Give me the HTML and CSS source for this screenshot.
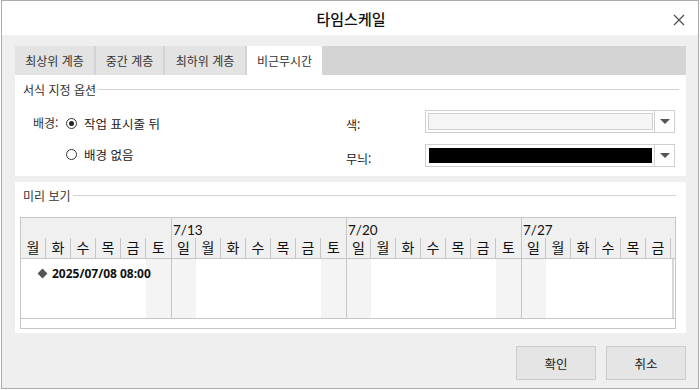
FILE: index.html
```html
<!DOCTYPE html>
<html lang="ko">
<head>
<meta charset="utf-8">
<link rel="stylesheet" href="styles.css">
</head>
<body>
<div class="dialog">
  <div class="titlebar">
    <div class="title">타임스케일</div>
    <svg class="close" width="12" height="12" viewBox="0 0 12 12"><path d="M1 1L11 11M11 1L1 11" stroke="#555" stroke-width="1.4" fill="none"/></svg>
  </div>
  <div class="content">
    <div class="tabs">
      <div class="tab">최상위 계층</div>
      <div class="tab">중간 계층</div>
      <div class="tab">최하위 계층</div>
      <div class="tab active">비근무시간</div>
    </div>
    <div class="panel panel-top">
      <div class="legend"><span>서식 지정 옵션</span><i></i></div>
      <div class="options">
        <div class="bg-opts">
          <div class="lbl">배경:</div>
          <div class="radios">
            <div class="radio checked"><span class="dot"></span>작업 표시줄 뒤</div>
            <div class="radio"><span class="dot"></span>배경 없음</div>
          </div>
        </div>
        <div class="combos">
          <div class="combo-row row1">
            <div class="clbl">색:</div>
            <div class="combo"><div class="swatch light"></div><div class="arrow"></div></div>
          </div>
          <div class="combo-row row2">
            <div class="clbl">무늬:</div>
            <div class="combo"><div class="swatch dark"></div><div class="arrow"></div></div>
          </div>
        </div>
      </div>
    </div>
    <div class="panel panel-prev">
      <div class="legend"><span>미리 보기</span><i></i></div>
      <div class="gantt">
        <div class="cols">
          <div class="col"><div class="date"></div><div class="day">월</div><div class="cell"></div></div>
          <div class="col"><div class="date"></div><div class="day">화</div><div class="cell"></div></div>
          <div class="col"><div class="date"></div><div class="day">수</div><div class="cell"></div></div>
          <div class="col"><div class="date"></div><div class="day">목</div><div class="cell"></div></div>
          <div class="col"><div class="date"></div><div class="day">금</div><div class="cell"></div></div>
          <div class="col we"><div class="date"></div><div class="day last">토</div><div class="cell"></div></div>
          <div class="col we wk"><div class="date">7/13</div><div class="day">일</div><div class="cell"></div></div>
          <div class="col"><div class="date"></div><div class="day">월</div><div class="cell"></div></div>
          <div class="col"><div class="date"></div><div class="day">화</div><div class="cell"></div></div>
          <div class="col"><div class="date"></div><div class="day">수</div><div class="cell"></div></div>
          <div class="col"><div class="date"></div><div class="day">목</div><div class="cell"></div></div>
          <div class="col"><div class="date"></div><div class="day">금</div><div class="cell"></div></div>
          <div class="col we"><div class="date"></div><div class="day last">토</div><div class="cell"></div></div>
          <div class="col we wk"><div class="date">7/20</div><div class="day">일</div><div class="cell"></div></div>
          <div class="col"><div class="date"></div><div class="day">월</div><div class="cell"></div></div>
          <div class="col"><div class="date"></div><div class="day">화</div><div class="cell"></div></div>
          <div class="col"><div class="date"></div><div class="day">수</div><div class="cell"></div></div>
          <div class="col"><div class="date"></div><div class="day">목</div><div class="cell"></div></div>
          <div class="col"><div class="date"></div><div class="day">금</div><div class="cell"></div></div>
          <div class="col we"><div class="date"></div><div class="day last">토</div><div class="cell"></div></div>
          <div class="col we wk"><div class="date">7/27</div><div class="day">일</div><div class="cell"></div></div>
          <div class="col"><div class="date"></div><div class="day">월</div><div class="cell"></div></div>
          <div class="col"><div class="date"></div><div class="day">화</div><div class="cell"></div></div>
          <div class="col"><div class="date"></div><div class="day">수</div><div class="cell"></div></div>
          <div class="col"><div class="date"></div><div class="day">목</div><div class="cell"></div></div>
          <div class="col"><div class="date"></div><div class="day">금</div><div class="cell"></div></div>
          <div class="col tail"><div class="date"></div><div class="day"></div><div class="cell"></div></div>
        </div>
        <div class="task"><span class="diamond"></span>2025/07/08 08:00</div>
        <div class="hscroll"></div>
      </div>
    </div>
    <div class="buttons">
      <button class="btn">확인</button>
      <button class="btn">취소</button>
    </div>
  </div>
</div>
</body>
</html>
```

FILE: styles.css
```css
* { box-sizing: border-box; }
html, body { margin: 0; padding: 0; }
body {
  width: 700px;
  height: 390px;
  background: #ffffff;
  font-family: "Noto Sans CJK KR", "Noto Sans", sans-serif;
  color: #222;
  overflow: hidden;
}
.dialog {
  margin-left: 1px;
  width: 698px;
  height: 389px;
  border: 1px solid #ababab;
  display: flex;
  flex-direction: column;
  background: #efefef;
}
.titlebar {
  height: 34px;
  background: #fff;
  display: flex;
  align-items: center;
  justify-content: center;
  position: relative;
  flex: none;
}
.title {
  font-size: 15px;
  font-weight: 500;
  color: #111;
  margin-left: 2px;
}
.close {
  position: absolute;
  right: 13px;
  top: 13px;
}
.content {
  flex: 1;
  padding: 11px 12px 0 13px;
  display: flex;
  flex-direction: column;
}
.tabs {
  height: 29px;
  background: #d4d4d4;
  display: flex;
  gap: 2px;
  flex: none;
}
.tab {
  background: #e3e3e3;
  font-size: 12px;
  color: #333;
  display: flex;
  align-items: center;
  justify-content: center;
  height: 29px;
}
.tab:nth-child(1) { width: 79px; }
.tab:nth-child(2) { width: 67px; }
.tab:nth-child(3) { width: 80px; }
.tab.active { width: 75px; background: #fff; }
.panel {
  background: #fff;
  flex: none;
}
.panel-top {
  height: 101px;
  padding: 5px 7px 0 8px;
}
.legend {
  display: flex;
  align-items: center;
  height: 18px;
  font-size: 12px;
  color: #333;
}
.legend i {
  flex: 1;
  height: 1px;
  background: #d3d3d3;
  margin-left: 2px;
}
.options {
  display: flex;
  margin-top: 17px;
}
.bg-opts {
  display: flex;
  width: 323px;
  padding-left: 10px;
}
.lbl {
  font-size: 12px;
  color: #333;
  width: 33px;
  line-height: 16px;
}
.radios {
  display: flex;
  flex-direction: column;
  gap: 15px;
}
.radio {
  display: flex;
  align-items: center;
  font-size: 12.5px;
  color: #222;
  height: 16px;
}
.radio .dot {
  width: 11px;
  height: 11px;
  border: 1px solid #333;
  border-radius: 50%;
  margin-right: 7px;
  position: relative;
}
.radio.checked .dot::after {
  content: "";
  position: absolute;
  left: 2px;
  top: 2px;
  width: 5px;
  height: 5px;
  border-radius: 50%;
  background: #222;
}
.combos {
  flex: 1;
  display: flex;
  flex-direction: column;
  gap: 11px;
  margin-top: -5px;
}
.combo-row {
  display: flex;
  align-items: center;
}
.clbl {
  width: 79px;
  font-size: 12px;
  color: #222;
  padding-top: 6px;
}
.combo {
  width: 250px;
  height: 23px;
  border: 1px solid #cfcfcf;
  display: flex;
  padding: 2px 0 2px 2px;
}
.swatch {
  width: 225px;
  border: 1px solid #d0d0d0;
}
.swatch.light { background: #f5f5f5; }
.swatch.dark { background: #000; border-color: #000; margin: 1px; width: 223px; }
.arrow {
  flex: 1;
  border-left: 1px solid #d0d0d0;
  margin: -2px 0 -2px 1px;
  position: relative;
}
.arrow::after {
  content: "";
  position: absolute;
  left: 5px;
  top: 8px;
  border-left: 5px solid transparent;
  border-right: 5px solid transparent;
  border-top: 5px solid #555;
}
.panel-prev {
  margin-top: 6px;
  height: 151px;
  padding: 4px 10px 0 5px;
}
.panel-prev .legend { padding-left: 3px; }
.gantt {
  margin-top: 13px;
  border: 1px solid #c6c6c6;
  position: relative;
  height: 112px;
  display: flex;
  flex-direction: column;
}
.cols {
  display: flex;
  flex: none;
}
.col {
  width: 25px;
  flex: none;
  display: flex;
  flex-direction: column;
}
.col.tail { flex: 1; width: auto; }
.col.wk { border-left: 1px solid #c6c6c6; }
.date {
  height: 20px;
  background: #f0f0f0;
  font-family: "Lato", "Liberation Sans", sans-serif;
  font-size: 13.5px;
  line-height: 15px;
  padding: 5px 0 0 1px;
  white-space: nowrap;
  color: #111;
  position: relative;
  z-index: 1;
}
.col.wk .date { z-index: 2; }
.day {
  height: 21px;
  background: #f0f0f0;
  border-right: 1px solid #c6c6c6;
  border-bottom: 1px solid #c6c6c6;
  font-size: 14px;
  line-height: 19px;
  text-align: center;
  color: #111;
}
.day.last { border-right: none; }
.col.tail .day { border-right: none; }
.cell {
  height: 59px;
  background: #fff;
}
.col.we .cell { background: #f4f4f4; }
.col.tail .cell { border-left: 2px solid #d6d6d6; margin-left: 1px; }
.task {
  position: absolute;
  left: 18px;
  top: 47px;
  display: flex;
  align-items: center;
  font-size: 12px;
  font-weight: bold;
  color: #111;
  font-family: "Noto Sans", "Noto Sans CJK KR", sans-serif;
}
.diamond {
  width: 7px;
  height: 7px;
  background: #555;
  transform: rotate(45deg);
  margin-right: 6px;
}
.hscroll {
  flex: 1;
  border-top: 1px solid #c6c6c6;
  background: #fff;
}
.buttons {
  display: flex;
  justify-content: flex-end;
  gap: 10px;
  margin-top: 13px;
}
.btn {
  width: 80px;
  height: 34px;
  background: #e5e5e5;
  border: 1px solid #cccccc;
  font-family: "Noto Sans CJK KR", sans-serif;
  font-size: 12.5px;
  color: #222;
  padding: 0;
}
```
